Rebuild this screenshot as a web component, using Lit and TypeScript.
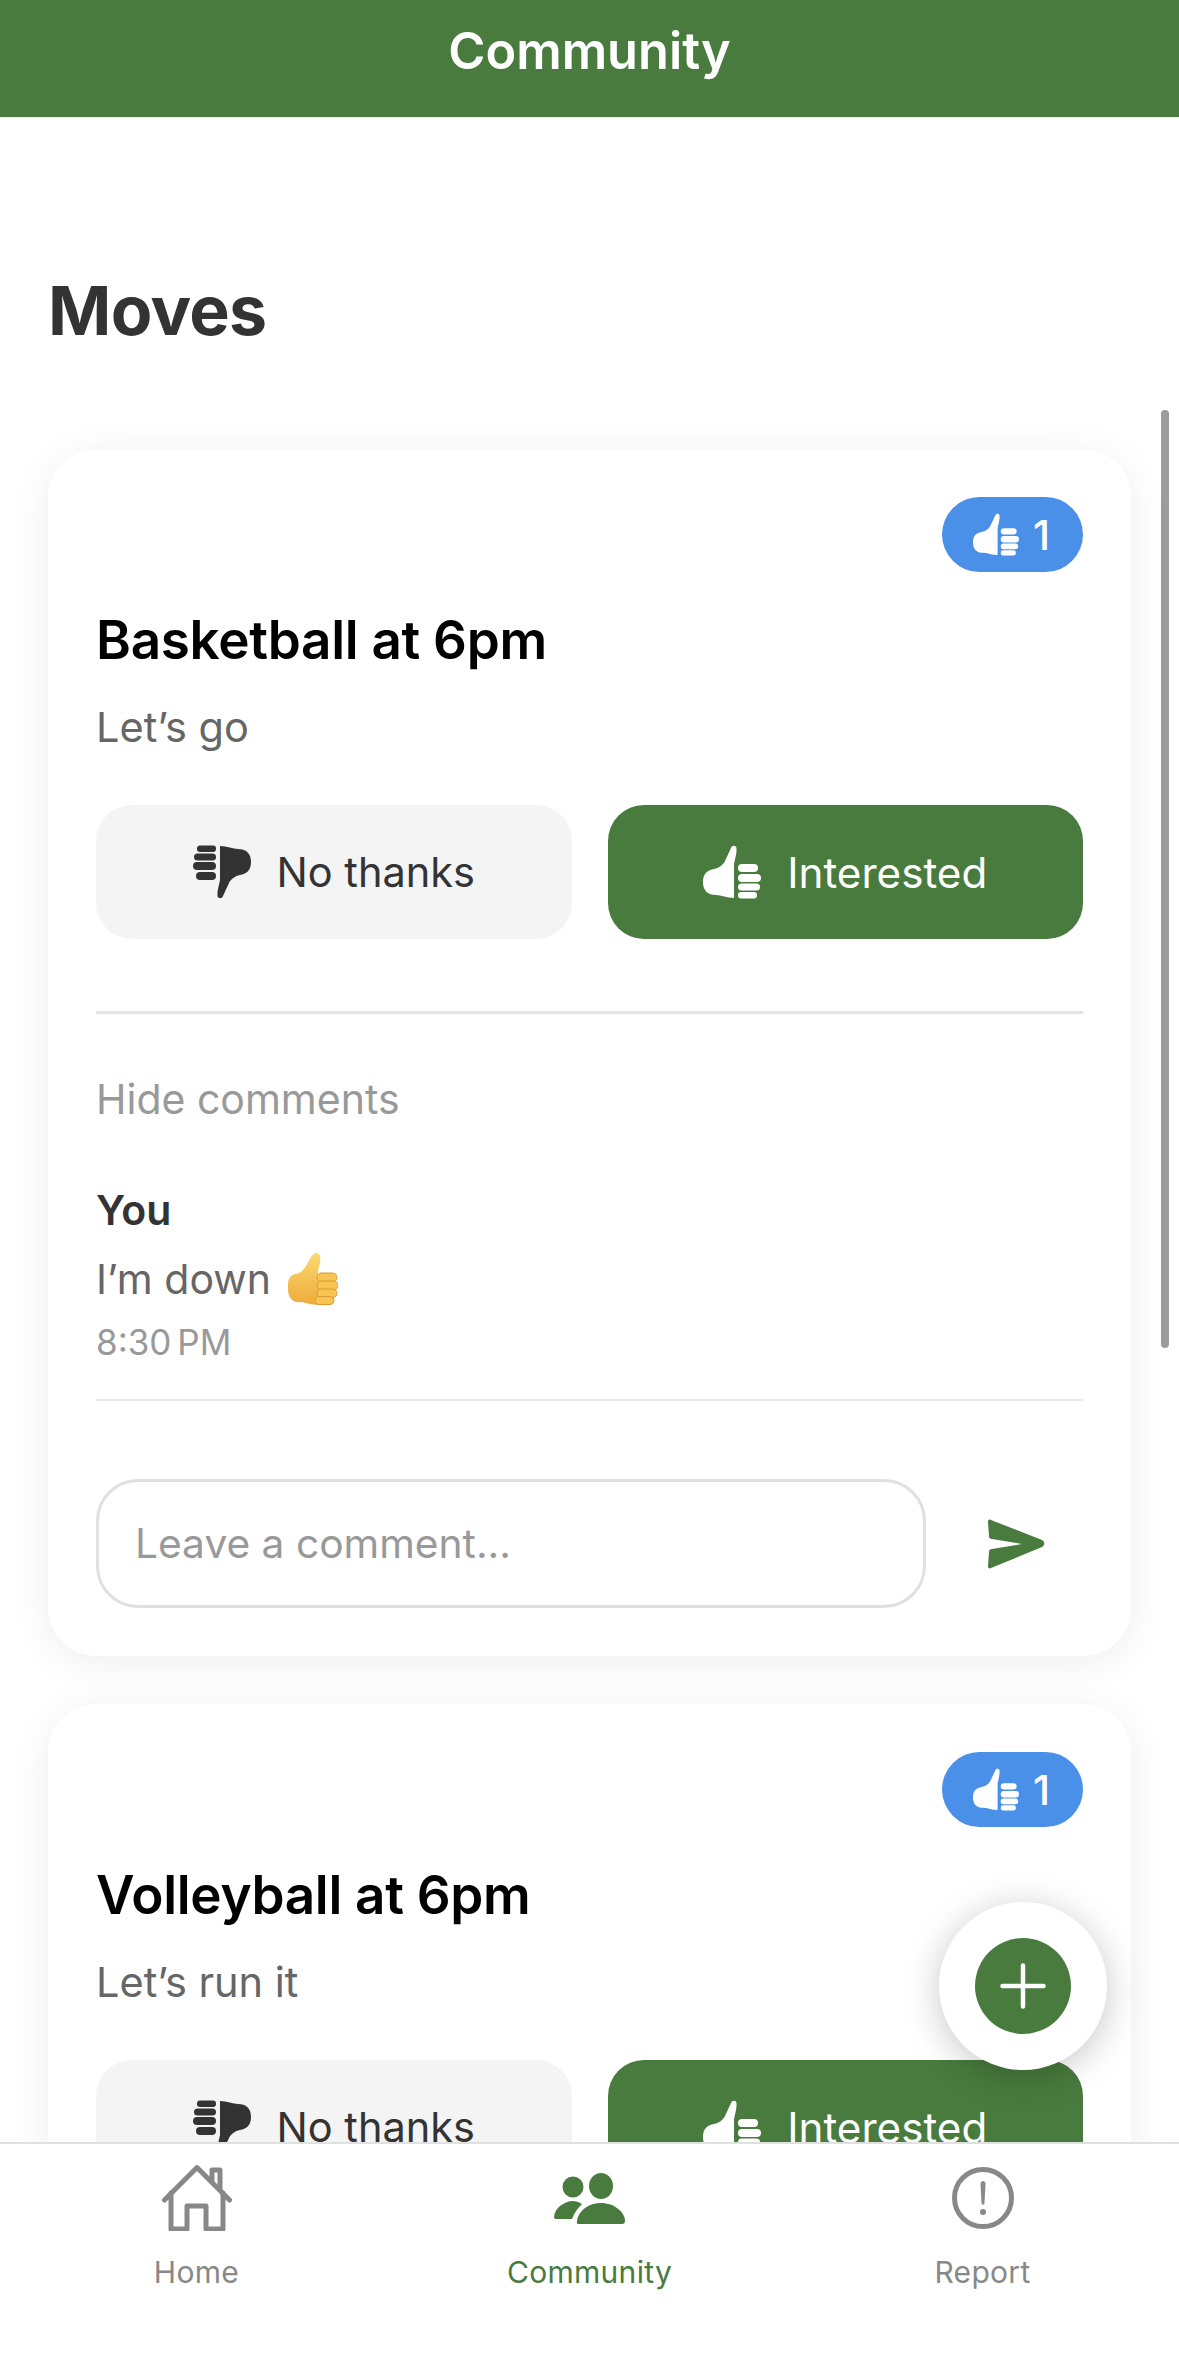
import { LitElement, html, css, svg } from "lit";
import { customElement } from "lit/decorators.js";

const thumbHand = svg`
  <path d="M28 3C29 0 33 0 33.5 3C34 8 32 14 31 19L31 53C24 53 18 50 13 50C5 50 0 46 0 37C0 28 5 25 11 24C16 23 20 20 22 16Z"/>
  <rect x="35" y="19" width="20" height="8" rx="4"/>
  <rect x="35" y="29" width="23" height="8" rx="4"/>
  <rect x="35" y="38.5" width="22" height="7" rx="3.5"/>
  <rect x="35" y="47" width="19" height="6.5" rx="3"/>`;

const thumbUp = (cls: string) => html`<svg class=${cls} viewBox="0 0 58 54" fill="currentColor" aria-hidden="true">${thumbHand}</svg>`;
const thumbDown = (cls: string) => html`<svg class=${cls} viewBox="0 0 58 54" fill="currentColor" aria-hidden="true"><g transform="rotate(180 29 27)">${thumbHand}</g></svg>`;

const emoji = html`<svg class="emoji" viewBox="0 0 50 52" role="img" aria-label="thumbs up">
  <defs><linearGradient id="eg" x1="0" y1="0" x2="0" y2="1"><stop offset="0" stop-color="#fbd871"/><stop offset="1" stop-color="#eeac3c"/></linearGradient></defs>
  <path d="M20 9C22 6 24 1 28 0C32 0 33 4 32 9C31 14 30 17 30 19L33 52C26 52 20 51 14 49C8 50 1 48 0 38C-1 28 1 22 8 21C14 20 17 15 20 9Z" fill="url(#eg)"/>
  <g fill="#f8c552" stroke="#d99a35" stroke-width="1">
    <rect x="29" y="20" width="20" height="9" rx="4.5"/>
    <rect x="29" y="28" width="21" height="9" rx="4.5"/>
    <rect x="29" y="36" width="20" height="8.5" rx="4.2"/>
    <rect x="27" y="43.5" width="19" height="8" rx="4"/>
  </g>
</svg>`;

const moves = [
  { title: "Basketball at 6pm", sub: "Let’s go", comments: true },
  { title: "Volleyball at 6pm", sub: "Let’s run it", comments: false },
];

@customElement("app-root")
export class AppRoot extends LitElement {
  static styles = css`
    :host {
      display: flex;
      flex-direction: column;
      position: relative;
      width: 1179px;
      height: 2379px;
      overflow: hidden;
      background: #fff;
      font-family: Inter, "Liberation Sans", sans-serif;
      color: #333;
    }
    .header {
      flex: none;
      height: 117px;
      background: #487b3d;
      box-shadow: 0 1px 3px rgba(0, 0, 0, 0.08);
      color: #fff;
      font-size: 50.5px;
      font-weight: 600;
      line-height: 102px;
      text-align: center;
      position: relative;
      z-index: 1;
    }
    .main {
      flex: 1;
      min-height: 0;
      overflow: hidden;
      padding: 0 48px;
    }
    h1 {
      margin: 155px 0 0;
      font-size: 68px;
      line-height: 76px;
      font-weight: 700;
      color: #333;
      letter-spacing: -0.7px;
    }
    .list {
      margin-top: 101px;
      display: flex;
      flex-direction: column;
      gap: 48px;
    }
    .card {
      background: #fff;
      border-radius: 48px;
      padding: 48px;
      box-shadow: 0 6px 40px rgba(0, 0, 0, 0.07);
    }
    .badge-row {
      display: flex;
      justify-content: flex-end;
    }
    .badge {
      display: flex;
      align-items: center;
      gap: 14px;
      height: 75px;
      width: 141px;
      box-sizing: border-box;
      padding-left: 31px;
      border-radius: 38px;
      background: #4a90e8;
      color: #fff;
      font-size: 41px;
      font-weight: 500;
    }
    .i-badge { width: 46px; height: 43px; }
    .i-btn { width: 58px; height: 54px; }
    .title {
      margin: 35px 0 0;
      font-size: 53px;
      line-height: 66px;
      font-weight: 600;
      color: #000;
      letter-spacing: -0.3px;
    }
    .sub {
      margin: 27px 0 0;
      font-size: 41.5px;
      line-height: 54px;
      color: #666;
    }
    .actions {
      display: grid;
      grid-template-columns: 1fr 1fr;
      gap: 36px;
      margin-top: 51px;
    }
    .btn {
      height: 134px;
      border: 0;
      border-radius: 36px;
      display: flex;
      align-items: center;
      justify-content: center;
      gap: 26px;
      font: inherit;
      font-size: 41.5px;
      font-weight: 400;
    }
    .btn.no { background: #f4f4f4; color: #333; }
    .btn.yes { background: #487b3d; color: #fff; font-size: 42.2px; }
    .comments {
      margin-top: 72px;
      border-top: 3px solid #e4e4e4;
    }
    .toggle {
      margin-top: 58px;
      font-size: 41px;
      line-height: 54px;
      color: #999;
    }
    .who {
      margin-top: 57px;
      font-size: 41px;
      line-height: 54px;
      font-weight: 600;
      color: #333;
    }
    .body {
      margin-top: 15px;
      font-size: 41px;
      line-height: 54px;
      color: #666;
      display: flex;
      align-items: center;
      gap: 17px;
    }
    .emoji { width: 50px; height: 52px; }
    .time {
      margin-top: 14px;
      font-size: 35px;
      line-height: 44px;
      word-spacing: -4px;
      color: #999;
      padding-bottom: 35px;
      border-bottom: 2px solid #e8e8e8;
    }
    .composer {
      margin-top: 78px;
      display: flex;
      align-items: center;
      gap: 62px;
    }
    .input {
      width: 830px;
      box-sizing: border-box;
      height: 129px;
      border: 3px solid #e0e0e0;
      border-radius: 42px;
      padding-left: 36px;
      display: flex;
      align-items: center;
      font-size: 40.7px;
      color: #999;
    }
    .send { width: 57px; height: 50px; color: #487b3d; }
    .nav {
      flex: none;
      height: 237px;
      box-sizing: border-box;
      border-top: 2px solid #e0e0e0;
      background: #fff;
      display: grid;
      grid-template-columns: repeat(3, 1fr);
      position: relative;
      z-index: 1;
    }
    .tab {
      display: flex;
      flex-direction: column;
      align-items: center;
      color: #888;
      font-size: 30px;
      letter-spacing: 0.3px;
    }
    .tab.on { color: #487b3d; }
    .ic {
      height: 88px;
      display: flex;
      align-items: center;
      justify-content: center;
      margin-top: 10px;
    }
    .lbl { margin-top: 11px; line-height: 38px; }
    .i-home { width: 70px; height: 66px; }
    .i-comm { width: 71px; height: 51px; }
    .i-rep { width: 62px; height: 62px; }
    .scrollbar {
      position: absolute;
      left: 1161px;
      top: 410px;
      width: 8px;
      height: 938px;
      border-radius: 4px;
      background: #9c9c9c;
    }
    .fab {
      position: absolute;
      left: 939px;
      top: 1902px;
      width: 168px;
      height: 168px;
      border-radius: 50%;
      background: #fff;
      box-shadow: 0 6px 36px rgba(0, 0, 0, 0.22);
      display: flex;
      align-items: center;
      justify-content: center;
    }
    .fab-in {
      width: 96px;
      height: 96px;
      border-radius: 50%;
      background: #487b3d;
      display: flex;
      align-items: center;
      justify-content: center;
    }
    .i-plus { width: 46px; height: 46px; }
  `;

  private card(m: (typeof moves)[number]) {
    return html`<article class="card">
      <div class="badge-row"><div class="badge">${thumbUp("i-badge")}<span>1</span></div></div>
      <h2 class="title">${m.title}</h2>
      <p class="sub">${m.sub}</p>
      <div class="actions">
        <button class="btn no">${thumbDown("i-btn")}<span>No thanks</span></button>
        <button class="btn yes">${thumbUp("i-btn")}<span>Interested</span></button>
      </div>
      ${m.comments
        ? html`<section class="comments">
            <div class="toggle">Hide comments</div>
            <div class="who">You</div>
            <div class="body"><span>I’m down</span>${emoji}</div>
            <div class="time">8:30 PM</div>
            <div class="composer">
              <div class="input">Leave a comment...</div>
              <svg class="send" viewBox="0 0 57 50" fill="currentColor" aria-hidden="true">
                <path d="M3 1L54 21C57 23 57 26 54 28L3 49C1 50 0 49 0 47L1 33C1 31 2 30 4 30L34 25L4 20C2 20 1 19 1 17L0 3C0 1 1 0 3 1Z"/>
              </svg>
            </div>
          </section>`
        : ""}
    </article>`;
  }

  render() {
    return html`
      <header class="header">Community</header>
      <main class="main">
        <h1>Moves</h1>
        <div class="list">${moves.map((m) => this.card(m))}</div>
      </main>
      <nav class="nav">
        <div class="tab">
          <div class="ic">
            <svg class="i-home" viewBox="0 0 70 66" fill="none" stroke="currentColor" stroke-width="5" stroke-linejoin="round" stroke-linecap="round" aria-hidden="true">
              <path d="M2.500 35L35 2.500L67.500 35"/>
              <path d="M9 28V64H25V41H44V64H61V28"/>
              <path d="M50 16V5H58V24"/>
            </svg>
          </div>
          <div class="lbl">Home</div>
        </div>
        <div class="tab on">
          <div class="ic">
            <svg class="i-comm" viewBox="0 0 71 51" fill="currentColor" aria-hidden="true">
              <ellipse cx="19" cy="14" rx="10.500" ry="10.500"/>
              <ellipse cx="47" cy="13" rx="12" ry="13"/>
              <path d="M0 44C1 35 9 29 18 28C22 28 25 29 28 31C24 35 20 40 18 46H2C1 46 0 45 0 44Z"/>
              <path d="M24 51C22 51 23 47 24 44C27 36 36 30 47 30C60 30 71 39 71 48C71 50 70 51 68 51Z"/>
            </svg>
          </div>
          <div class="lbl">Community</div>
        </div>
        <div class="tab">
          <div class="ic">
            <svg class="i-rep" viewBox="0 0 62 62" aria-hidden="true">
              <circle cx="31" cy="31" r="28.500" fill="none" stroke="currentColor" stroke-width="5"/>
              <path d="M28.500 17C28.500 13 33.500 13 33.500 17L32.500 36C32.400 38 29.600 38 29.500 36Z" fill="currentColor"/>
              <circle cx="31" cy="45" r="3" fill="currentColor"/>
            </svg>
          </div>
          <div class="lbl">Report</div>
        </div>
      </nav>
      <div class="scrollbar"></div>
      <div class="fab">
        <div class="fab-in">
          <svg class="i-plus" viewBox="0 0 46 46" stroke="#fff" stroke-width="4.500" stroke-linecap="round" aria-hidden="true">
            <path d="M23 2.500V43.500M2.500 23H43.500"/>
          </svg>
        </div>
      </div>
    `;
  }
}
